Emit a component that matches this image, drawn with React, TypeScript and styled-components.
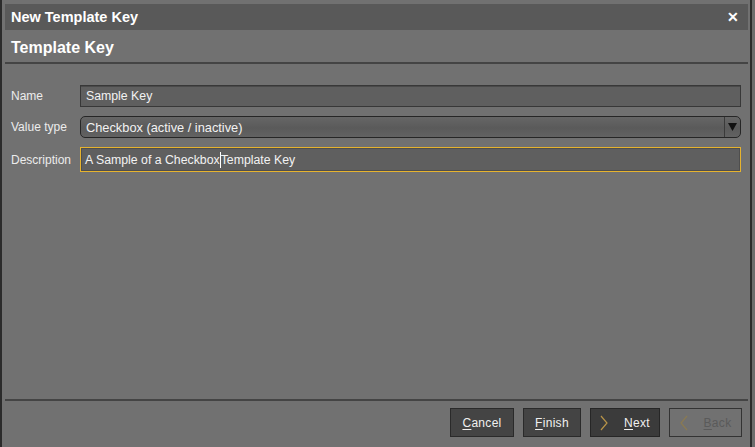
import React from "react";
import styled, { createGlobalStyle, css } from "styled-components";

const Global = createGlobalStyle`
  html, body { margin: 0; padding: 0; background: #6f6f6f; }
  body { font-family: "Liberation Sans", Arial, sans-serif; font-size: 12px; color: #ececec; }
  * { box-sizing: border-box; }
`;

const Page = styled.div`
  width: 755px;
  height: 447px;
  display: flex;
  background: #6c6c6c;
`;

const Window = styled.div`
  width: 752px;
  height: 447px;
  background: #717171;
  border-left: 2px solid #2b2b2b;
  border-right: 2px solid #2b2b2b;
  padding: 4px 2px 0 3px;
  display: flex;
  flex-direction: column;
`;

const TitleBar = styled.div`
  height: 26px;
  background: #595959;
  display: flex;
  align-items: center;
  justify-content: space-between;
  padding: 0 9px 0 6px;
`;

const Title = styled.div`
  font-weight: bold;
  font-size: 14.5px;
  color: #ffffff;
`;

const Close = styled.div`
  font-size: 14px;
  font-weight: bold;
  color: #ffffff;
  line-height: 1;
`;

const Header = styled.div`
  height: 34px;
  display: flex;
  align-items: center;
  padding: 3px 0 0 6px;
  font-weight: bold;
  font-size: 16px;
  color: #ffffff;
  border-bottom: 2px solid #444444;
`;

const Form = styled.div`
  flex: 1;
  display: grid;
  grid-template-columns: 69px 1fr;
  grid-auto-rows: min-content;
  row-gap: 9px;
  align-items: center;
  padding: 21px 7px 0 6px;
`;

const Label = styled.div`
  font-size: 12px;
  color: #ececec;
`;

const Field = styled.div<{ $focused?: boolean }>`
  height: 22px;
  background: #5f5f5f;
  border: 1px solid #383838;
  box-shadow: inset 0 1px 0 #4a4a4a;
  padding: 0 5px;
  display: flex;
  align-items: center;
  font-size: 12.3px;
  color: #f2f2f2;
  ${(p) =>
    p.$focused &&
    css`
      height: 25px;
      border: 1px solid #e6b32e;
      box-shadow: inset 0 0 0 1px #4e4e4e;
      padding-left: 4px;
    `}
`;

const Caret = styled.span`
  display: inline-block;
  width: 1px;
  height: 16px;
  background: #ffffff;
  vertical-align: middle;
`;

const Select = styled.div`
  height: 22px;
  border: 1px solid #262626;
  border-radius: 5px;
  background: linear-gradient(#666666, #5a5a5a 55%, #626262);
  display: flex;
  align-items: stretch;
  font-size: 12.8px;
  color: #f2f2f2;
`;

const SelectText = styled.div`
  flex: 1;
  display: flex;
  align-items: center;
  padding-left: 5px;
`;

const SelectArrow = styled.div`
  width: 16px;
  border-left: 1px solid #3a3a3a;
  display: flex;
  align-items: center;
  justify-content: center;
`;

const Footer = styled.div`
  border-top: 2px solid #444444;
  height: 48px;
  display: flex;
  justify-content: flex-end;
  align-items: flex-start;
  gap: 9px;
  padding: 7px 6px 0 0;
`;

const Button = styled.div<{ $variant?: "normal" | "primary" | "disabled"; $w: number }>`
  width: ${(p) => p.$w}px;
  height: 29px;
  display: flex;
  align-items: center;
  justify-content: center;
  gap: 16px;
  font-size: 12px;
  letter-spacing: 0.3px;
  color: #f0f0f0;
  background: #444444;
  border: 1px solid #2a2a2a;
  ${(p) =>
    p.$variant === "primary" &&
    css`
      background: #3b3b3b;
      border-color: #262626;
    `}
  ${(p) =>
    p.$variant === "disabled" &&
    css`
      background: transparent;
      border-color: #333333;
      color: #5a5a5a;
    `}
  u { text-underline-offset: 2px; }
`;

const Chevron = ({ dir, color }: { dir: "left" | "right"; color: string }) => (
  <svg width="8" height="16" viewBox="0 0 8 16">
    <path
      d={dir === "right" ? "M1 1 L7 8 L1 15" : "M7 1 L1 8 L7 15"}
      fill="none"
      stroke={color}
      strokeWidth="1.2"
    />
  </svg>
);

export default function App() {
  return (
    <Page>
      <Global />
      <Window>
        <TitleBar>
          <Title>New Template Key</Title>
          <Close>✕</Close>
        </TitleBar>
        <Header>Template Key</Header>
        <Form>
          <Label>Name</Label>
          <Field>Sample Key</Field>
          <Label>Value type</Label>
          <Select>
            <SelectText>Checkbox (active / inactive)</SelectText>
            <SelectArrow>
              <svg width="9" height="8" viewBox="0 0 9 8">
                <path d="M0 0 H9 L4.5 8 Z" fill="#111" />
              </svg>
            </SelectArrow>
          </Select>
          <Label>Description</Label>
          <Field $focused>
            A Sample of a Checkbox<Caret />Template Key
          </Field>
        </Form>
        <Footer>
          <Button $w={64}>
            <span><u>C</u>ancel</span>
          </Button>
          <Button $w={58}>
            <span><u>F</u>inish</span>
          </Button>
          <Button $w={70} $variant="primary">
            <Chevron dir="right" color="#b89448" />
            <span><u>N</u>ext</span>
          </Button>
          <Button $w={73} $variant="disabled">
            <Chevron dir="left" color="#8a7a52" />
            <span><u>B</u>ack</span>
          </Button>
        </Footer>
      </Window>
    </Page>
  );
}
